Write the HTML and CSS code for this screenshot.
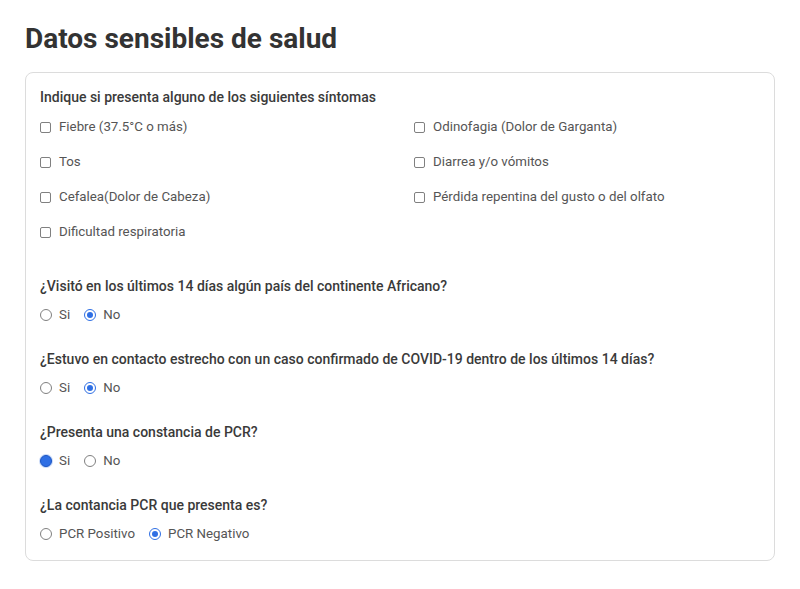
FILE: index.html
```html
<!DOCTYPE html>
<html lang="es">
<head>
<meta charset="utf-8">
<title>Datos sensibles de salud</title>
<link rel="stylesheet" href="styles.css">
</head>
<body>
<main class="page">
  <h1 class="title">Datos sensibles de salud</h1>
  <section class="card">
    <p class="q">Indique si presenta alguno de los siguientes síntomas</p>
    <div class="checks">
      <label class="opt"><span class="box"></span>Fiebre (37.5°C o más)</label>
      <label class="opt"><span class="box"></span>Odinofagia (Dolor de Garganta)</label>
      <label class="opt"><span class="box"></span>Tos</label>
      <label class="opt"><span class="box"></span>Diarrea y/o vómitos</label>
      <label class="opt"><span class="box"></span>Cefalea(Dolor de Cabeza)</label>
      <label class="opt"><span class="box"></span>Pérdida repentina del gusto o del olfato</label>
      <label class="opt"><span class="box"></span>Dificultad respiratoria</label>
    </div>

    <div class="group">
      <p class="q">¿Visitó en los últimos 14 días algún país del continente Africano?</p>
      <div class="radios">
        <label class="opt"><span class="radio"></span>Si</label>
        <label class="opt"><span class="radio on"></span>No</label>
      </div>
    </div>

    <div class="group">
      <p class="q">¿Estuvo en contacto estrecho con un caso confirmado de COVID-19 dentro de los últimos 14 días?</p>
      <div class="radios">
        <label class="opt"><span class="radio"></span>Si</label>
        <label class="opt"><span class="radio on"></span>No</label>
      </div>
    </div>

    <div class="group">
      <p class="q">¿Presenta una constancia de PCR?</p>
      <div class="radios">
        <label class="opt"><span class="radio focus"></span>Si</label>
        <label class="opt"><span class="radio"></span>No</label>
      </div>
    </div>

    <div class="group">
      <p class="q">¿La contancia PCR que presenta es?</p>
      <div class="radios">
        <label class="opt"><span class="radio"></span>PCR Positivo</label>
        <label class="opt"><span class="radio on"></span>PCR Negativo</label>
      </div>
    </div>
  </section>
</main>
</body>
</html>
```

FILE: styles.css
```css
* { box-sizing: border-box; }
body {
  margin: 0;
  background: #fff;
  font-family: Roboto, "Noto Sans", sans-serif;
  color: #333;
}
.page {
  padding: 21px 25px 0 25px;
  width: 800px;
}
.title {
  margin: 0 0 15px 0;
  font-size: 28px;
  line-height: 36px;
  font-weight: 700;
  color: #333;
}
.card {
  width: 750px;
  border: 1px solid #dcdcdc;
  border-radius: 8px;
  padding: 14px 14px 16px 14px;
}
.q {
  margin: 0;
  font-size: 14px;
  line-height: 20px;
  font-weight: 500;
  color: #3a3a3a;
}
.checks {
  display: grid;
  grid-template-columns: 374px 1fr;
  row-gap: 15px;
  margin-top: 10px;
}
.opt {
  display: flex;
  align-items: center;
  font-size: 13.3px;
  line-height: 20px;
  color: #555;
  font-weight: 400;
}
.box {
  width: 11px;
  height: 11px;
  border: 1px solid #808080;
  border-radius: 2px;
  margin-right: 8px;
  flex: none;
}
.group { margin-top: 34px; }
.group + .group { margin-top: 24px; }
.radios {
  display: flex;
  gap: 14px;
  margin-top: 9px;
}
.radio {
  width: 12px;
  height: 12px;
  border: 1px solid #808080;
  border-radius: 50%;
  margin-right: 7px;
  flex: none;
  position: relative;
}
.radio.on {
  border-color: #2f6fe4;
}
.radio.on::after {
  content: "";
  position: absolute;
  left: 2px;
  top: 2px;
  width: 6px;
  height: 6px;
  border-radius: 50%;
  background: #2f6fe4;
}
.radio.focus {
  background: #2f6fe4;
  border-color: #1b56c4;
  box-shadow: 0 0 0 1px #c8d9f8;
}
```
